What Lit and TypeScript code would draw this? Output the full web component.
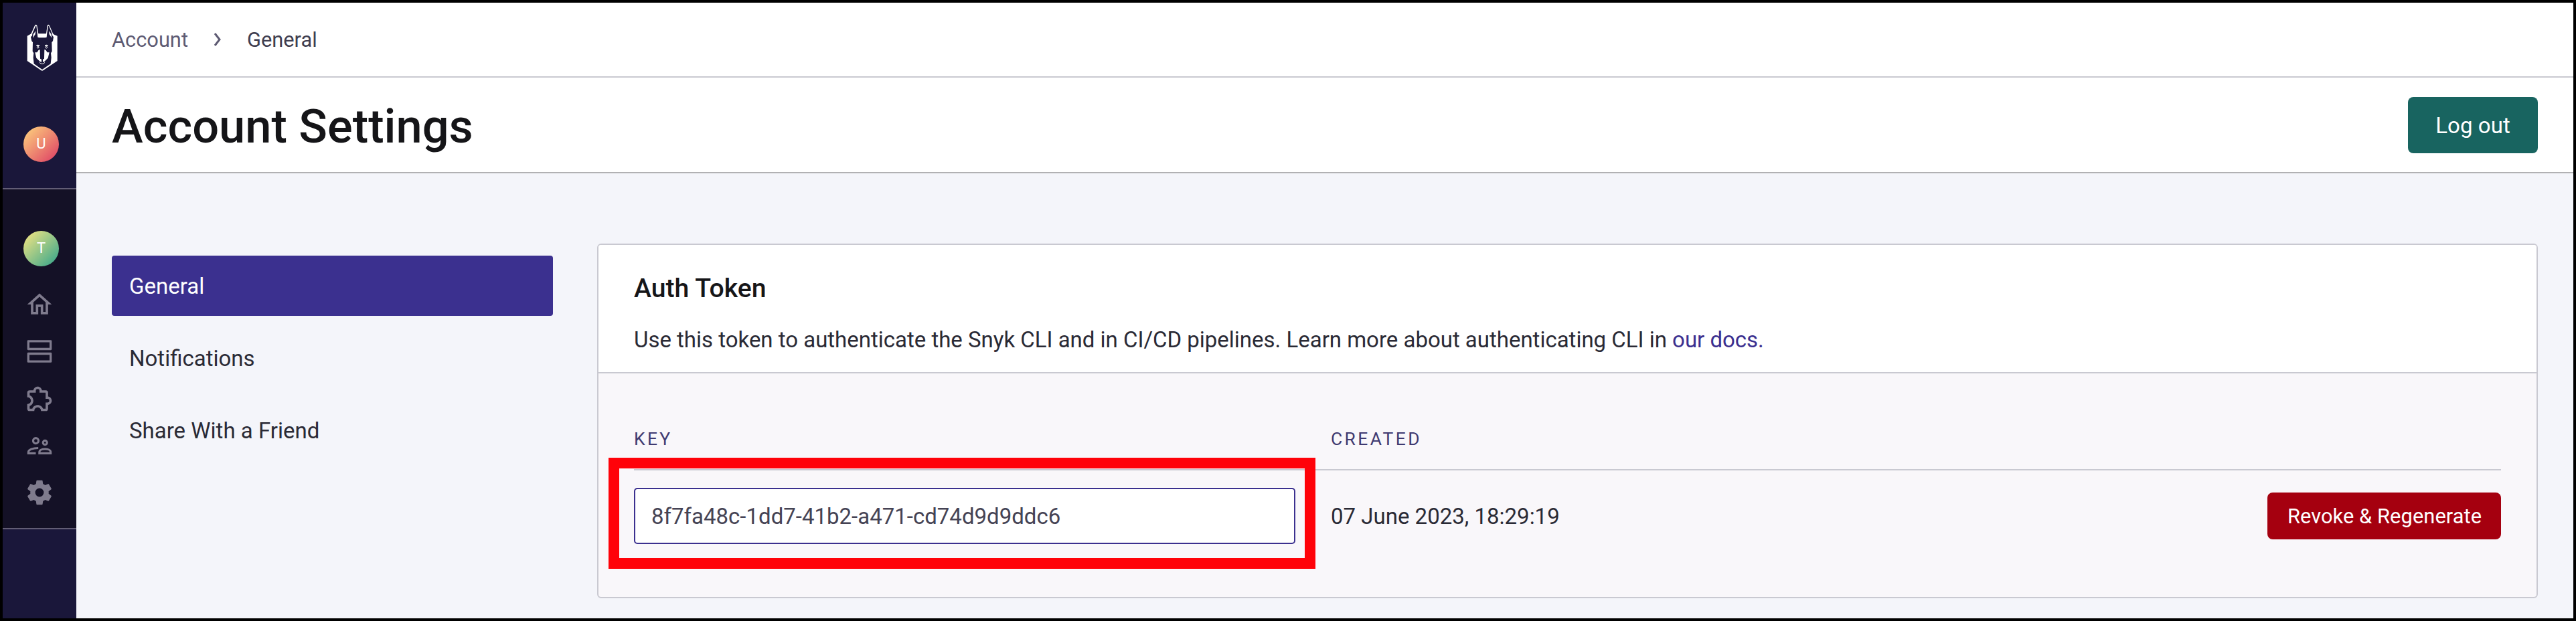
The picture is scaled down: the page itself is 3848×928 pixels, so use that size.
import { LitElement, html, svg, css } from "lit";
import { customElement } from "lit/decorators.js";
import { classMap } from "lit/directives/class-map.js";

const HOME = svg`<path d="M12 5.69l5 4.5V18h-2v-6H9v6H7v-7.81l5-4.5M12 3L2 12h3v8h6v-6h2v6h6v-8h3L12 3z"/>`;
const PROJECTS = svg`<path fill-rule="evenodd" d="M2.8 2.8H21.2Q22 2.8 22 3.6V10.2Q22 11 21.2 11H2.8Q2 11 2 10.2V3.6Q2 2.8 2.8 2.8ZM3.8 4.6V9.2H20.2V4.6ZM2.8 13H21.2Q22 13 22 13.8V20.4Q22 21.2 21.2 21.2H2.8Q2 21.2 2 20.4V13.8Q2 13 2.8 13ZM3.8 14.8V19.4H20.2V14.8Z"/>`;
const PUZZLE = svg`<path d="M22,13.5C22,15.26 20.7,16.72 19,16.96V20A2,2 0 0,1 17,22H13.2V21.7A2.7,2.7 0 0,0 10.5,19C9,19 7.8,20.21 7.8,21.7V22H4A2,2 0 0,1 2,20V16.2H2.3C3.79,16.2 5,15 5,13.5C5,12 3.79,10.8 2.3,10.8H2V7A2,2 0 0,1 4,5H7.04C7.28,3.3 8.74,2 10.5,2C12.26,2 13.72,3.3 13.96,5H17A2,2 0 0,1 19,7V10.04C20.7,10.28 22,11.74 22,13.5M17,15H18.5A1.5,1.5 0 0,0 20,13.5A1.5,1.5 0 0,0 18.5,12H17V7H12V5.5A1.5,1.5 0 0,0 10.5,4A1.5,1.5 0 0,0 9,5.5V7H4V9.12C5.76,9.8 7,11.5 7,13.5C7,15.5 5.75,17.2 4,17.88V20H6.12C6.8,18.25 8.5,17 10.5,17C12.5,17 14.2,18.25 14.88,20H17V15Z"/>`;
const MEMBERS = svg`<g fill="none" stroke="currentColor" stroke-width="1.7"><circle cx="9" cy="8" r="2.2"/><circle cx="16.5" cy="9.5" r="1.65"/><path d="M9 18.2H2.9V17.3C2.9 15.2 6.6 13.9 11 13.9"/><path d="M11.9 18.2V17.3C11.9 13.9 21.1 13.9 21.1 17.3V18.2Z"/></g>`;
const GEAR = svg`<path d="M12,15.5A3.5,3.5 0 0,1 8.5,12A3.5,3.5 0 0,1 12,8.5A3.5,3.5 0 0,1 15.5,12A3.5,3.5 0 0,1 12,15.5M19.43,12.97C19.47,12.65 19.5,12.33 19.5,12C19.5,11.67 19.47,11.34 19.43,11L21.54,9.37C21.73,9.22 21.78,8.95 21.66,8.73L19.66,5.27C19.54,5.05 19.27,4.96 19.05,5.05L16.56,6.05C16.04,5.66 15.5,5.32 14.87,5.07L14.5,2.42C14.46,2.18 14.25,2 14,2H10C9.75,2 9.54,2.18 9.5,2.42L9.13,5.07C8.5,5.32 7.96,5.66 7.44,6.05L4.95,5.05C4.73,4.96 4.46,5.05 4.34,5.27L2.34,8.73C2.21,8.95 2.27,9.22 2.46,9.37L4.57,11C4.53,11.34 4.5,11.67 4.5,12C4.5,12.33 4.53,12.65 4.57,12.97L2.46,14.63C2.27,14.78 2.21,15.05 2.34,15.27L4.34,18.73C4.46,18.95 4.73,19.03 4.95,18.95L7.44,17.94C7.96,18.34 8.5,18.68 9.13,18.93L9.5,21.58C9.54,21.82 9.75,22 10,22H14C14.25,22 14.46,21.82 14.5,21.58L14.87,18.93C15.5,18.67 16.04,18.34 16.56,17.94L19.05,18.95C19.27,19.03 19.54,18.95 19.66,18.73L21.66,15.27C21.78,15.05 21.73,14.78 21.54,14.63L19.43,12.97Z"/>`;

@customElement("side-rail")
class SideRail extends LitElement {
  static styles = css`
    :host { display: flex; flex-direction: column; width: 110px; flex: none; background: #1a173a; font-family: Roboto, sans-serif; }
    .top { height: 277px; padding-top: 32px; box-sizing: border-box; display: flex; flex-direction: column; align-items: center; gap: 83px; }
    .logo { width: 46px; height: 70px; margin-left: 7px; display: block; flex: none; }
    .avatar { width: 53px; height: 53px; border-radius: 50%; margin-left: 5px; flex: none; color: #fff; font-size: 22px; line-height: 51px; text-align: center; }
    .user { background: linear-gradient(135deg, #fccb7c 8%, #e04a66 90%); }
    .team { background: linear-gradient(135deg, #ebe283 8%, #43aa8b 90%); }
    .org { height: 510px; box-sizing: border-box; padding-top: 62px; background: #141126; border-top: 2px solid #625d75; border-bottom: 2px solid #625d75; display: flex; flex-direction: column; align-items: center; }
    .icons { display: flex; flex-direction: column; gap: 26.3px; margin-top: 35px; color: #7f7b8d; }
    .icon { width: 44px; height: 44px; fill: currentColor; display: block; }
  `;
  render() {
    return html`
      <div class="top">
        <svg class="logo" viewBox="120 106 138 210">
          <path fill="#fff" d="M122 159L135 152Q139 151 141 146L155 114Q161 103 166 113L172 149H207L212 113Q216 103 222 113L236 146Q238 151 243 153L257 159V271L194 313Q189 317 184 313L122 271Z"/>
          <path fill="#1a173a" d="M144 158L145 148L160 114L163 114L167 146L169 165L176 167H203L209 165L211 146L216 114L219 114L233 148L235 158L240 164L237 182L232 188L233 228L228 236L230 256L227 284L190 309H188L152 284L149 256L151 236L146 228L147 188L142 182L138 164Z"/>
          <path fill="#fff" d="M147 168L149 152L160 137L158 152ZM232 168L230 152L219 137L221 152ZM162 202Q168 196 177 200V204H163ZM201 204V200Q210 196 216 202L215 204ZM157 233L166 233L173 222L179 220L180 261L186 264V276Q178 276 173 268L163 258ZM221 233L212 233L205 222L199 220L198 261L192 264V276Q200 276 205 268L215 258Z"/>
          <g fill="none" stroke="#fff" stroke-width="3"><path d="M177 278Q189 292 201 278"/><circle cx="170" cy="210" r="4"/><circle cx="208" cy="210" r="4"/></g>
        </svg>
        <div class="avatar user">U</div>
      </div>
      <div class="org">
        <div class="avatar team">T</div>
        <div class="icons">
          ${[HOME, PROJECTS, PUZZLE, MEMBERS, GEAR].map((i) => html`<svg class="icon" viewBox="0 0 24 24">${i}</svg>`)}
        </div>
      </div>`;
  }
}

@customElement("token-card")
class TokenCard extends LitElement {
  static styles = css`
    :host { display: block; box-sizing: border-box; height: 530px; border: 2px solid #c9c9d1; border-radius: 6px; background: #f9f7fa; color: #2a2a35; overflow: hidden; font: 33px/40px Roboto, sans-serif; }
    .head { height: 192px; box-sizing: border-box; padding: 42px 53px 0; background: #fff; border-bottom: 2px solid #c9c9d1; }
    h2 { margin: 0 0 34px; font-size: 39.2px; line-height: 46px; font-weight: 500; color: #151518; }
    p { margin: 0; letter-spacing: -0.012px; }
    a { color: #3b308f; text-decoration: none; }
    .body { padding: 82px 53px 0; }
    .row { display: grid; grid-template-columns: 1041px 1fr auto; align-items: center; }
    .labels { border-bottom: 2px solid #c9c9d1; padding-bottom: 29px; font-size: 26.4px; line-height: 32px; letter-spacing: 3.4px; color: #3f3a70; }
    .values { margin-top: 26px; }
    .date { padding-top: 1px; }
    .key { position: relative; width: 988px; height: 84px; }
    .key::after { content: ""; position: absolute; left: -38px; top: -45px; width: 1056px; height: 166px; box-sizing: border-box; border: 16px solid #ff0209; pointer-events: none; }
    input { display: block; width: 100%; height: 100%; box-sizing: border-box; border: 2px solid #3b308f; border-radius: 5px; background: #fff; padding: 1px 24px 0; font: inherit; color: #454354; outline: none; }
    .revoke { width: 349px; height: 70px; border: 0; border-radius: 8px; background: #a5000f; color: #fff; font: 30.8px/70px Roboto, sans-serif; letter-spacing: 0.08px; padding: 1px 0 0 1px; }
  `;
  render() {
    return html`
      <div class="head">
        <h2>Auth Token</h2>
        <p>Use this token to authenticate the Snyk CLI and in CI/CD pipelines. Learn more about authenticating CLI in <a href="#">our docs.</a></p>
      </div>
      <div class="body">
        <div class="row labels"><span>KEY</span><span>CREATED</span></div>
        <div class="row values">
          <div class="key"><input readonly .value=${"8f7fa48c-1dd7-41b2-a471-cd74d9d9ddc6"} /></div>
          <span class="date">07 June 2023, 18:29:19</span>
          <button class="revoke">Revoke &amp; Regenerate</button>
        </div>
      </div>`;
  }
}

@customElement("app-root")
class AppRoot extends LitElement {
  static styles = css`
    :host { display: flex; box-sizing: border-box; width: 100%; height: 928px; border: 4px solid #000; background: #f4f5fa; font-family: Roboto, sans-serif; color: #2a2a35; }
    main { flex: 1; min-width: 0; }
    .crumbs { height: 112px; box-sizing: border-box; padding-left: 53px; display: flex; align-items: center; background: #fff; border-bottom: 2px solid #c9c9d1; font-size: 30.8px; color: #5e5b73; }
    .chevron { width: 14px; height: 22px; margin: 0 37px 0 37px; fill: none; stroke: #5e5b73; stroke-width: 3; }
    .current { color: #403e50; }
    .title { height: 143px; box-sizing: border-box; padding: 0 53px; display: flex; align-items: center; justify-content: space-between; background: #fff; border-bottom: 2px solid #b1b1b3; }
    h1 { margin: 5px 0 0; font-size: 70.4px; line-height: 82px; font-weight: 500; color: #151518; }
    .logout { width: 194px; height: 84px; border: 0; border-radius: 8px; background: #186460; color: #fff; font: 33px/84px Roboto, sans-serif; letter-spacing: 0.05px; padding: 1px 0 0; }
    .content { display: flex; align-items: flex-start; gap: 66px; padding: 105px 53px 0; }
    nav { width: 659px; flex: none; margin-top: 18px; display: flex; flex-direction: column; gap: 18px; }
    .item { height: 90px; padding-left: 26px; border-radius: 4px; font-size: 33px; line-height: 92px; }
    .active { background: #3b308f; color: #fff; }
    token-card { flex: 1; }
  `;
  render() {
    return html`
      <side-rail></side-rail>
      <main>
        <div class="crumbs">
          <span>Account</span>
          <svg class="chevron" viewBox="0 0 14 22"><path d="M3 2L10 11L3 20"/></svg>
          <span class="current">General</span>
        </div>
        <div class="title"><h1>Account Settings</h1><button class="logout">Log out</button></div>
        <div class="content">
          <nav>
            ${["General", "Notifications", "Share With a Friend"].map((n, i) => html`<div class=${classMap({ item: true, active: i === 0 })}>${n}</div>`)}
          </nav>
          <token-card></token-card>
        </div>
      </main>`;
  }
}
